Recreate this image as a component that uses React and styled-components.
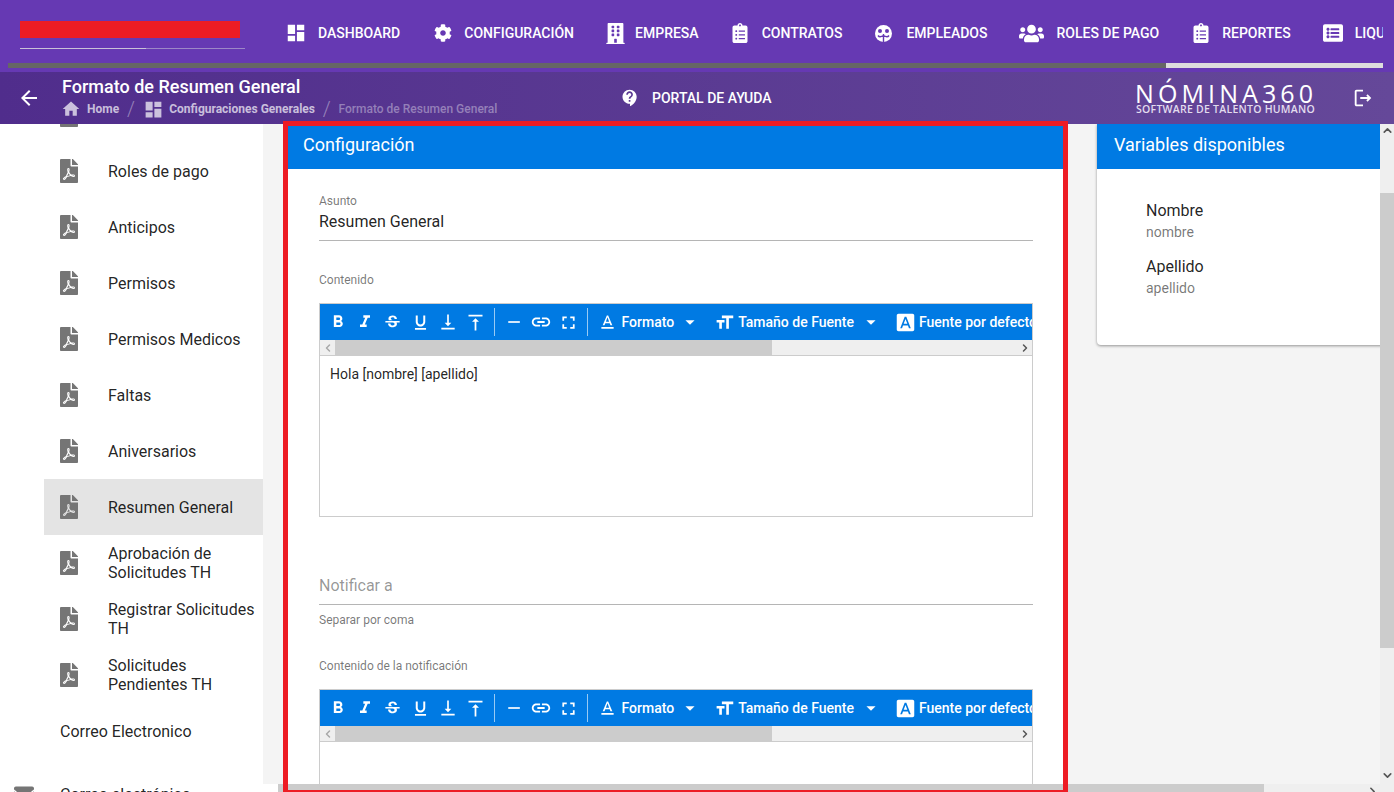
import React from 'react'
import styled, { createGlobalStyle } from 'styled-components'
import {
    MdDashboard, MdHome, MdArrowBack, MdContactSupport, MdOutlineLogout, MdFormatBold, MdFormatItalic,
    MdStrikethroughS, MdFormatUnderlined, MdVerticalAlignBottom, MdVerticalAlignTop, MdRemove, MdLink,
    MdFullscreen, MdTextFormat, MdFormatSize, MdFontDownload, MdArrowDropDown
} from 'react-icons/md'
import { FaCog, FaBuilding, FaClipboardList, FaUsers, FaListAlt, FaFilePdf, FaEnvelope } from 'react-icons/fa'
import { FiChevronLeft, FiChevronRight, FiChevronUp, FiChevronDown } from 'react-icons/fi'

const GlobalStyle = createGlobalStyle`
    html, body {
        margin: 0;
        height: 792px;
        overflow: hidden;
        background: #fff;
        font-family: Roboto, "Liberation Sans", sans-serif;
    }
    * { box-sizing: border-box; }
`

const StyledPage = styled.div`
    position: relative;
    display: flex;
    flex-direction: column;
    width: 1394px;
    height: 792px;
    overflow: hidden;
`

const StyledTopBar = styled.div`
    flex: none;
    height: 72px;
    background: #6639b3;
    color: #fff;
`

const StyledTopRow = styled.div`
    display: flex;
    align-items: flex-start;
    height: 63px;
    margin-right: 11px;
    padding-left: 20px;
    overflow: hidden;
`

const StyledLogoBlock = styled.div`
    flex: none;
    width: 225px;
    margin-right: 43px;
    padding-top: 21px;
`

const StyledLogoMark = styled.div`
    width: 220px;
    height: 17px;
    background: #ed1c24;
`

const StyledLogoLine = styled.div`
    height: 1px;
    margin-top: 10px;
    background: linear-gradient(to right, #c9c2d8 56%, #9d87c7 56%);
`

const StyledNav = styled.nav`
    display: flex;
    align-items: center;
    gap: 32px;
    padding-top: 21px;
`

const StyledNavItem = styled.a`
    display: flex;
    flex: none;
    align-items: center;
    height: 24px;
    margin-left: ${({$left}) => $left || 0}px;
    gap: ${({$gap}) => $gap}px;
    font-size: 14px;
    font-weight: 500;
    color: #fff;
    text-transform: uppercase;
`

const StyledNavScroll = styled.div`
    display: flex;
    height: 5px;
    margin: 0 11px 0 8px;
`

const StyledNavThumb = styled.div`
    width: 1158px;
    background: #666;
`

const StyledNavTrack = styled.div`
    flex: 1;
    background: #ddd;
`

const StyledSubBar = styled.div`
    flex: none;
    display: flex;
    align-items: center;
    height: 52px;
    padding-left: 17px;
    background: linear-gradient(to right, #502d8c, #654899);
    color: #fff;
`

const StyledBack = styled.span`
    display: flex;
    width: 45px;
`

const StyledTitleBlock = styled.div`
    width: 558px;
    margin-bottom: 3px;
`

const StyledTitle = styled.div`
    font-size: 18px;
    line-height: 24px;
    font-weight: 500;
`

const StyledCrumbs = styled.div`
    display: flex;
    align-items: center;
    height: 18px;
    margin-top: 1px;
    font-size: 12px;
    font-weight: 700;
    color: rgba(255, 255, 255, .7);
`

const StyledCrumbLink = styled.span`
    display: flex;
    align-items: center;
    gap: ${({$gap}) => $gap}px;
    margin-left: ${({$left}) => $left || 0}px;
`

const StyledCrumbSlash = styled.span`
    width: 23.5px;
    text-align: center;
    font-size: 20px;
    font-weight: 300;
    color: rgba(255, 255, 255, .4);
`

const StyledCrumbLast = styled.span`
    font-weight: 500;
    color: rgba(255, 255, 255, .38);
`

const StyledHelp = styled.div`
    display: flex;
    align-items: center;
    gap: 12px;
    width: 515px;
    font-size: 14px;
    font-weight: 500;
`

const StyledBrand = styled.div`
    width: 181px;
    margin: 4px 36px 0 0;
    text-align: center;
    font-family: "Open Sans", sans-serif;
`

const StyledBrandName = styled.div`
    font-size: 25px;
    line-height: 14px;
    letter-spacing: 4.1px;
    font-weight: 400;
    white-space: nowrap;
`

const StyledBrandTag = styled.div`
    margin-top: 4px;
    font-size: 10.5px;
    line-height: 11px;
    font-weight: 600;
    letter-spacing: .25px;
    white-space: nowrap;
    color: #e2dcee;
`

const StyledBody = styled.div`
    flex: 1;
    display: flex;
    min-height: 0;
`

const StyledSidebar = styled.aside`
    flex: none;
    width: 263px;
    overflow: hidden;
    background: #fff;
`

const StyledSideList = styled.div`
    margin-top: -37px;
`

const StyledSideItem = styled.div`
    display: flex;
    align-items: center;
    height: 56px;
    margin-left: 44px;
    padding-left: 16px;
    background: ${({$active}) => $active ? '#e4e4e4' : 'transparent'};
    color: rgba(0, 0, 0, .87);
    font-size: 16px;
    line-height: 19px;
`

const StyledSideIcon = styled.span`
    display: flex;
    flex: none;
    width: 48px;
    margin-left: -3px;
    color: #757575;
`

const StyledSideLabel = styled.span`
    margin-left: 3px;
`

const StyledSideHeading = styled.div`
    display: flex;
    align-items: center;
    height: 56px;
    padding-left: 60px;
    font-size: 16px;
    color: rgba(0, 0, 0, .87);
`

const StyledSideRoot = styled.div`
    display: flex;
    align-items: center;
    height: 40px;
    margin-top: 15px;
    padding-left: 14px;
    font-size: 16px;
    color: rgba(0, 0, 0, .87);
`

const StyledSideRootIcon = styled.span`
    display: flex;
    width: 46px;
    color: #757575;
`

const StyledMainColumn = styled.div`
    flex: 1;
    display: flex;
    flex-direction: column;
    min-width: 0;
`

const StyledMainRow = styled.div`
    flex: 1;
    display: flex;
    min-height: 0;
`

const StyledContent = styled.main`
    flex: 1;
    display: flex;
    align-items: flex-start;
    gap: 34px;
    min-width: 0;
    padding-left: 25px;
    overflow: hidden;
    background: #f4f4f4;
`

const StyledCard = styled.section`
    flex: none;
    width: ${({$width}) => $width}px;
    background: #fff;
    border-radius: 0 0 4px 4px;
    box-shadow: 0 1px 3px rgba(0, 0, 0, .4);
`

const StyledCardHeader = styled.header`
    display: flex;
    align-items: center;
    height: 45px;
    padding: 0 0 4px ${({$pad}) => $pad}px;
    background: #007ae3;
    color: #fff;
    font-size: 18px;
`

const StyledFormBody = styled.div`
    padding: 24px 30px 0 31px;
    height: 700px;
`

const StyledLabel = styled.div`
    font-size: 12px;
    line-height: 16px;
    color: rgba(0, 0, 0, .54);
    margin-top: ${({$top}) => $top || 0}px;
`

const StyledInput = styled.div`
    height: 32px;
    margin-top: ${({$top}) => $top || 0}px;
    padding-top: 3px;
    border-bottom: 1px solid #b5b5b5;
    font-size: 16px;
    line-height: 19px;
    color: ${({$placeholder}) => $placeholder ? 'rgba(0, 0, 0, .42)' : 'rgba(0, 0, 0, .87)'};
`

const StyledHelper = styled.div`
    margin-top: 7px;
    font-size: 12px;
    line-height: 16px;
    color: rgba(0, 0, 0, .54);
`

const StyledEditor = styled.div`
    height: 214px;
    margin-top: 15px;
    border: 1px solid #ccc;
    overflow: hidden;
`

const StyledToolbar = styled.div`
    display: flex;
    align-items: center;
    height: 36px;
    padding-left: 4px;
    overflow: hidden;
    background: #007ae3;
    color: #fff;
`

const StyledToolIcon = styled.span`
    display: flex;
    flex: none;
    justify-content: center;
    width: 27.5px;
`

const StyledToolSep = styled.span`
    flex: none;
    width: 1px;
    height: 28px;
    margin: 0 5.5px 0 4.5px;
    background: rgba(255, 255, 255, .6);
`

const StyledToolDrop = styled.span`
    display: flex;
    flex: none;
    align-items: center;
    gap: ${({$gap}) => $gap}px;
    margin-left: ${({$left}) => $left}px;
    font-size: 14px;
    font-weight: 500;
    white-space: nowrap;
`

const StyledCaret = styled.span`
    display: flex;
    margin-left: ${({$left}) => $left}px;
`

const StyledEditorScroll = styled.div`
    display: flex;
    height: 16px;
    border-bottom: 1px solid #ccc;
    background: #efefef;
`

const StyledArrowButton = styled.span`
    display: flex;
    align-items: center;
    justify-content: center;
    flex: none;
    width: 15px;
    color: ${({$dim}) => $dim ? '#a8a8a8' : '#555'};
`

const StyledScrollFill = styled.span`
    flex: ${({$fill}) => $fill ? 1 : 'none'};
    width: ${({$width}) => $width ? `${$width}px` : 'auto'};
    background: ${({$thumb}) => $thumb ? '#ccc' : 'transparent'};
`

const StyledEditorText = styled.div`
    padding: 10px 10px;
    font-size: 14px;
    line-height: 17px;
    color: rgba(0, 0, 0, .87);
`

const StyledVariableList = styled.div`
    height: 176px;
    padding: 32px 0 0 49px;
`

const StyledVariable = styled.div`
    margin-bottom: 16px;
`

const StyledVariableName = styled.div`
    font-size: 16px;
    line-height: 20px;
    color: rgba(0, 0, 0, .87);
`

const StyledVariableKey = styled.div`
    margin-top: 2px;
    font-size: 14px;
    line-height: 18px;
    color: rgba(0, 0, 0, .54);
`

const StyledVScroll = styled.div`
    flex: none;
    display: flex;
    flex-direction: column;
    width: 14px;
    background: #efefef;
`

const StyledVThumb = styled.div`
    height: 455px;
    margin-top: 54px;
    background: #ccc;
`

const StyledVArrow = styled.span`
    display: flex;
    justify-content: center;
    height: 15px;
    color: #555;
    margin-top: ${({$auto}) => $auto ? 'auto' : 0};
`

const StyledHScroll = styled.div`
    flex: none;
    display: flex;
    justify-content: space-between;
    height: 8px;
    margin-left: 15px;
    overflow: hidden;
    background: #efefef;
`

const StyledHThumb = styled.div`
    width: 986px;
    background: #ccc;
`

const StyledHArrow = styled.span`
    display: flex;
    flex: none;
    margin: 1px 15px 0 0;
    color: #555;
`

const StyledFrame = styled.div`
    position: absolute;
    left: 283px;
    top: 121px;
    width: 785px;
    height: 674px;
    border: 5px solid #ed1c24;
    pointer-events: none;
`

function FaceIcon() {
    return <svg width='17' height='17' viewBox='0 0 17 17'>
        <circle cx='8.5' cy='8.5' r='8.5' fill='#fff' />
        <circle cx='5' cy='6' r='2' fill='#6639b3' />
        <circle cx='12' cy='6' r='2' fill='#6639b3' />
        <path d='M8.5 9v8M3 10.5c1 1.500 3 1.500 5.500 0 2.500 1.500 4.500 1.500 5.500 0' fill='none' stroke='#6639b3' strokeWidth='1.4' />
    </svg>
}

const navItems = [
    {label: 'Dashboard', icon: <MdDashboard size={22} />, left: -3, gap: 11},
    {label: 'Configuración', icon: <FaCog size={18} />, left: 2, gap: 12},
    {label: 'Empresa', icon: <FaBuilding size={21} />, left: -1.3, gap: 9.3},
    {label: 'Contratos', icon: <FaClipboardList size={20} />, left: -.5, gap: 11.5},
    {label: 'Empleados', icon: <FaceIcon />, left: 1, gap: 14},
    {label: 'Roles de pago', icon: <FaUsers size={25} />, left: 0, gap: 12},
    {label: 'Reportes', icon: <FaClipboardList size={20} />, left: -.5, gap: 11.5},
    {label: 'Liquidaciones', icon: <FaListAlt size={20} />, left: 0, gap: 12}
]

const sideItems = [
    ['Roles de pago'],
    ['Anticipos'],
    ['Permisos'],
    ['Permisos Medicos'],
    ['Faltas'],
    ['Aniversarios'],
    ['Resumen General', true],
    ['Aprobación de Solicitudes TH'],
    ['Registrar Solicitudes TH'],
    ['Solicitudes Pendientes TH']
]

const Editor = ({children}) => <StyledEditor>
    <StyledToolbar>
        <StyledToolIcon><MdFormatBold size={20} /></StyledToolIcon>
        <StyledToolIcon><MdFormatItalic size={20} /></StyledToolIcon>
        <StyledToolIcon><MdStrikethroughS size={19} /></StyledToolIcon>
        <StyledToolIcon><MdFormatUnderlined size={19} /></StyledToolIcon>
        <StyledToolIcon><MdVerticalAlignBottom size={20} /></StyledToolIcon>
        <StyledToolIcon><MdVerticalAlignTop size={21} /></StyledToolIcon>
        <StyledToolSep />
        <StyledToolIcon><MdRemove size={20} /></StyledToolIcon>
        <StyledToolIcon><MdLink size={22} /></StyledToolIcon>
        <StyledToolIcon><MdFullscreen size={21} /></StyledToolIcon>
        <StyledToolSep />
        <StyledToolDrop $left={3} $gap={4}>
            <MdTextFormat size={21} />Formato
            <StyledCaret $left={1}><MdArrowDropDown size={22} /></StyledCaret>
        </StyledToolDrop>
        <StyledToolDrop $left={13} $gap={3}>
            <MdFormatSize size={21} />Tamaño de Fuente
            <StyledCaret $left={3}><MdArrowDropDown size={22} /></StyledCaret>
        </StyledToolDrop>
        <StyledToolDrop $left={13} $gap={3}><MdFontDownload size={21} />Fuente por defecto</StyledToolDrop>
    </StyledToolbar>
    <StyledEditorScroll>
        <StyledArrowButton $dim><FiChevronLeft size={12} strokeWidth={3} /></StyledArrowButton>
        <StyledScrollFill $thumb $width={437} />
        <StyledScrollFill $fill />
        <StyledArrowButton><FiChevronRight size={12} strokeWidth={3} /></StyledArrowButton>
    </StyledEditorScroll>
    <StyledEditorText>{children}</StyledEditorText>
</StyledEditor>

export default function App() {
    return <StyledPage>
        <GlobalStyle />
        <StyledTopBar>
            <StyledTopRow>
                <StyledLogoBlock>
                    <StyledLogoMark />
                    <StyledLogoLine />
                </StyledLogoBlock>
                <StyledNav>
                    {navItems.map(item => <StyledNavItem key={item.label} $left={item.left} $gap={item.gap}>
                        {item.icon}
                        {item.label}
                    </StyledNavItem>)}
                </StyledNav>
            </StyledTopRow>
            <StyledNavScroll>
                <StyledNavThumb />
                <StyledNavTrack />
            </StyledNavScroll>
        </StyledTopBar>

        <StyledSubBar>
            <StyledBack><MdArrowBack size={24} /></StyledBack>
            <StyledTitleBlock>
                <StyledTitle>Formato de Resumen General</StyledTitle>
                <StyledCrumbs>
                    <StyledCrumbLink $left={-1} $gap={6}><MdHome size={20} />Home</StyledCrumbLink>
                    <StyledCrumbSlash>/</StyledCrumbSlash>
                    <StyledCrumbLink $gap={5.6}><MdDashboard size={21} />Configuraciones Generales</StyledCrumbLink>
                    <StyledCrumbSlash>/</StyledCrumbSlash>
                    <StyledCrumbLast>Formato de Resumen General</StyledCrumbLast>
                </StyledCrumbs>
            </StyledTitleBlock>
            <StyledHelp><MdContactSupport size={20} />PORTAL DE AYUDA</StyledHelp>
            <StyledBrand>
                <StyledBrandName>NÓMINA360</StyledBrandName>
                <StyledBrandTag>SOFTWARE DE TALENTO HUMANO</StyledBrandTag>
            </StyledBrand>
            <MdOutlineLogout size={22} />
        </StyledSubBar>

        <StyledBody>
            <StyledSidebar>
                <StyledSideList>
                    <StyledSideItem><StyledSideIcon><FaFilePdf size={24} /></StyledSideIcon></StyledSideItem>
                    {sideItems.map(([label, active]) => <StyledSideItem key={label} $active={active}>
                        <StyledSideIcon><FaFilePdf size={24} /></StyledSideIcon>
                        <StyledSideLabel>{label}</StyledSideLabel>
                    </StyledSideItem>)}
                    <StyledSideHeading>Correo Electronico</StyledSideHeading>
                    <StyledSideRoot>
                        <StyledSideRootIcon><FaEnvelope size={20} /></StyledSideRootIcon>
                        Correo electrónico
                    </StyledSideRoot>
                </StyledSideList>
            </StyledSidebar>

            <StyledMainColumn>
                <StyledMainRow>
                    <StyledContent>
                        <StyledCard $width={775}>
                            <StyledCardHeader $pad={15}>Configuración</StyledCardHeader>
                            <StyledFormBody>
                                <StyledLabel>Asunto</StyledLabel>
                                <StyledInput>Resumen General</StyledInput>
                                <StyledLabel $top={31}>Contenido</StyledLabel>
                                <Editor>Hola [nombre] [apellido]</Editor>
                                <StyledInput $top={56} $placeholder>Notificar a</StyledInput>
                                <StyledHelper>Separar por coma</StyledHelper>
                                <StyledLabel $top={30}>Contenido de la notificación</StyledLabel>
                                <Editor />
                            </StyledFormBody>
                        </StyledCard>
                        <StyledCard $width={300}>
                            <StyledCardHeader $pad={17}>Variables disponibles</StyledCardHeader>
                            <StyledVariableList>
                                <StyledVariable>
                                    <StyledVariableName>Nombre</StyledVariableName>
                                    <StyledVariableKey>nombre</StyledVariableKey>
                                </StyledVariable>
                                <StyledVariable>
                                    <StyledVariableName>Apellido</StyledVariableName>
                                    <StyledVariableKey>apellido</StyledVariableKey>
                                </StyledVariable>
                            </StyledVariableList>
                        </StyledCard>
                    </StyledContent>
                    <StyledVScroll>
                        <StyledVArrow><FiChevronUp size={13} strokeWidth={3} /></StyledVArrow>
                        <StyledVThumb />
                        <StyledVArrow $auto><FiChevronDown size={13} strokeWidth={3} /></StyledVArrow>
                    </StyledVScroll>
                </StyledMainRow>
                <StyledHScroll>
                    <StyledHThumb />
                    <StyledHArrow><FiChevronRight size={13} strokeWidth={3} /></StyledHArrow>
                </StyledHScroll>
            </StyledMainColumn>
        </StyledBody>
        <StyledFrame />
    </StyledPage>
}
